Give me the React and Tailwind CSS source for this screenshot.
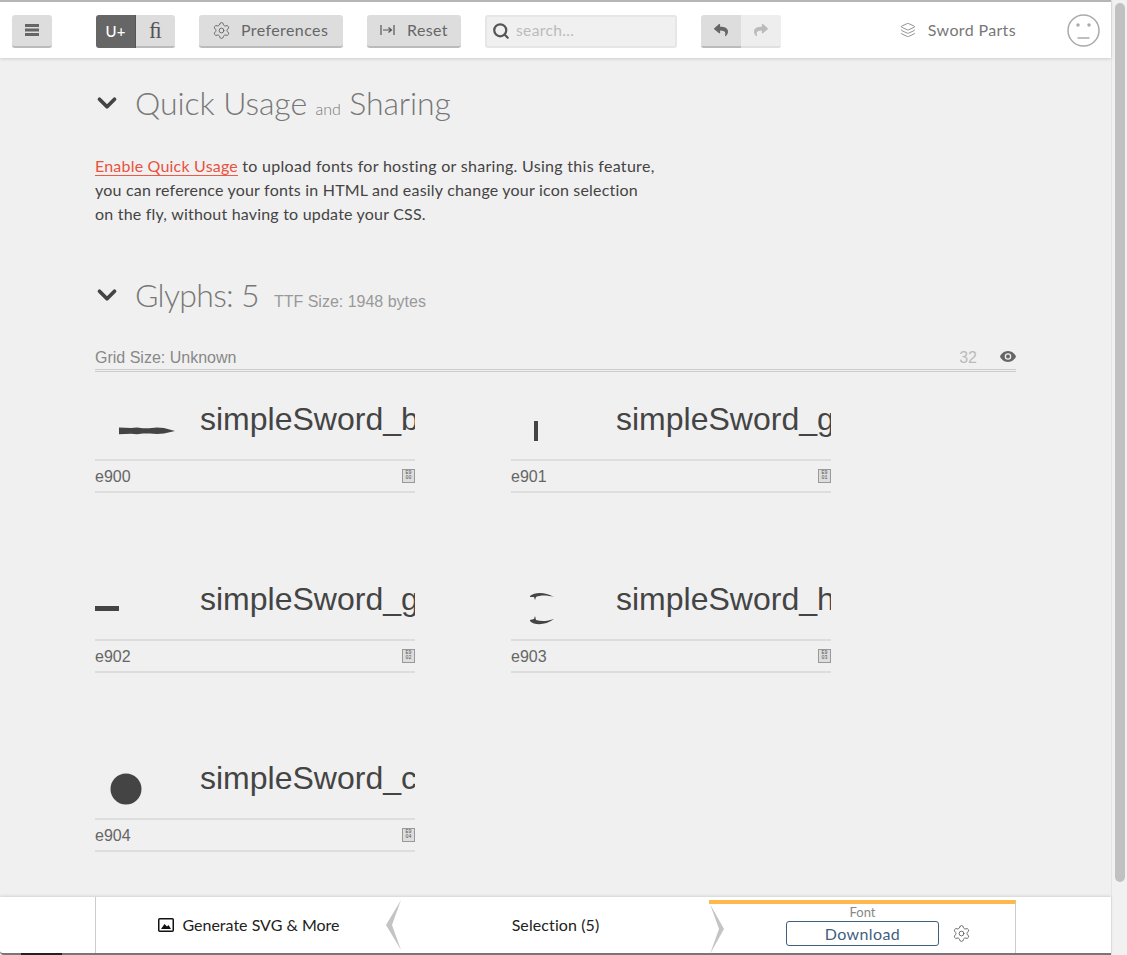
import React from "react";
import { ChevronDown, Search, Settings, Layers } from "lucide-react";
import { FaReply, FaShare } from "react-icons/fa";

const uiFont = { fontFamily: "Lato, 'Noto Sans', sans-serif" };

const Blade = () => (
  <svg width="60" height="12" viewBox="0 0 60 12" className="fill-[#444]">
    <path d="M2 2.5 L14 3 L20 2.5 L26 3.2 L32 3.2 L40 2.6 L47 3 L58 6 L47 8.6 L40 9 L33 8.5 L26 8.6 L20 9.3 L14 8.8 L2 9.2 Z" />
  </svg>
);

const Guard = () => (
  <svg width="60" height="24" viewBox="0 0 60 24" className="fill-[#444]">
    <rect x="23" y="2" width="4" height="20" />
  </svg>
);

const Grip = () => (
  <svg width="60" height="10" viewBox="0 0 60 10" className="fill-[#444]">
    <rect x="0" y="2" width="24" height="5" />
  </svg>
);

const Hilt = () => (
  <svg width="60" height="36" viewBox="0 0 60 36" className="fill-[#444]">
    <path d="M19 5 C24 1 34 1 43 6 C36 4 29 4 25 6 L24 9 L23 6 L19 6 Z" />
    <path d="M19 29 L23 28 L24 25 L25 29 C31 31 37 30 43 28 C35 34 24 35 19 30 Z" />
  </svg>
);

const Dot = () => (
  <svg width="60" height="34" viewBox="0 0 60 34" className="fill-[#444]">
    <circle cx="31" cy="17" r="15.5" />
  </svg>
);

const glyphs = [
  { code: "e900", name: "simpleSword_blade", icon: <Blade />, top: "pt-[36px]", left: "pl-[22px]" },
  { code: "e901", name: "simpleSword_guard", icon: <Guard />, top: "pt-[30px]", left: "pl-0" },
  { code: "e902", name: "simpleSword_grip", icon: <Grip />, top: "pt-[35px]", left: "pl-0" },
  { code: "e903", name: "simpleSword_hilt", icon: <Hilt />, top: "pt-[22px]", left: "pl-0" },
  { code: "e904", name: "simpleSword_circle", icon: <Dot />, top: "pt-[24px]", left: "pl-0" },
];

function GlyphCard({ glyph }) {
  return (
    <div className="w-[320px]">
      <div className="flex h-[72px] overflow-hidden border-b-2 border-[#ddd]">
        <div className={`w-[105px] shrink-0 ${glyph.top} ${glyph.left}`}>{glyph.icon}</div>
        <div className="whitespace-nowrap pt-[12px] font-['Liberation_Sans',sans-serif] text-[32px] leading-[37px] text-[#444]">
          {glyph.name}
        </div>
      </div>
      <div className="flex h-[32px] items-center justify-between border-b-2 border-[#ddd] pt-[2px] font-['Liberation_Sans',sans-serif] text-base text-[#666]">
        <span>{glyph.code}</span>
        <span className="mb-[2px] flex h-[14px] w-[13px] flex-col items-center justify-center border border-[#999] bg-[#ddd] font-['Liberation_Mono',monospace] text-[5px] leading-[5px] text-[#555]">
          <span>{glyph.code.slice(0, 2).toUpperCase()}</span>
          <span>{glyph.code.slice(2)}</span>
        </span>
      </div>
    </div>
  );
}

function SectionTitle({ children, className }) {
  return (
    <div className={`flex items-center ${className}`}>
      <ChevronDown size={30} strokeWidth={3} className="ml-[-3px] mr-[13px] text-[#444]" />
      {children}
    </div>
  );
}

export default function App() {
  return (
    <div className="flex h-[955px] w-[1127px] overflow-hidden bg-white" style={uiFont}>
      <div className="relative flex w-[1111px] flex-col bg-[#f0f0f0]">
        <header className="relative z-10 flex h-[58px] shrink-0 items-center border-t-2 border-[#b5b5b5] bg-white pl-[12px] pt-[2px] text-[#666] shadow-[0_1px_3px_rgba(0,0,0,0.15)]">
          <button className="flex h-[33px] w-[40px] items-center justify-center rounded-[3px] border-b-2 border-[#bbb] bg-[#ddd]">
            <svg width="14" height="12" viewBox="0 0 14 12" className="fill-[#666]">
              <rect y="0" width="14" height="3" />
              <rect y="4.5" width="14" height="3" />
              <rect y="9" width="14" height="3" />
            </svg>
          </button>

          <div className="ml-[44px] flex h-[33px] w-[79px] overflow-hidden rounded-[3px]">
            <div className="flex w-[40px] items-center justify-center border-r border-[#555] bg-[#666] text-[15px] font-medium text-white">U+</div>
            <div className="flex flex-1 items-center justify-center border-b-2 border-[#bbb] bg-[#ddd] pt-[3px] font-['Liberation_Serif',serif] text-[23px] text-[#555]">ﬁ</div>
          </div>

          <button className="ml-[24px] flex h-[33px] w-[144px] items-center rounded-[3px] border-b-2 border-[#bbb] bg-[#ddd] pl-[13px] text-[16px] tracking-[0.4px]">
            <Settings size={19} strokeWidth={1.2} />
            <span className="ml-[10px]">Preferences</span>
          </button>

          <button className="ml-[24px] flex h-[33px] w-[94px] items-center rounded-[3px] border-b-2 border-[#bbb] bg-[#ddd] pl-[13px] text-[16px] tracking-[0.4px]">
            <svg width="15" height="12" viewBox="0 0 15 12" fill="none" stroke="#555" strokeWidth="1.2">
              <path d="M1 1 V11 M14 1 V11 M3 6 H11 M8.5 3.5 L11.5 6 L8.5 8.5" />
            </svg>
            <span className="ml-[12px]">Reset</span>
          </button>

          <div className="ml-[24px] flex h-[33px] w-[192px] items-center rounded-[3px] border-2 border-[#e6e6e6] bg-[#f0f0f0] pl-[5px]">
            <Search size={18} strokeWidth={3} className="text-[#555]" />
            <span className="ml-[6px] text-[15.5px] tracking-[0.4px] text-[#bbb]">search…</span>
          </div>

          <div className="ml-[24px] flex h-[33px] w-[80px] overflow-hidden rounded-[3px]">
            <div className="flex w-[40px] items-center justify-center border-b-2 border-[#bbb] bg-[#ddd] text-[#666]">
              <FaReply size={14} />
            </div>
            <div className="flex flex-1 items-center justify-center border-b-2 border-[#e0e0e0] bg-[#eee] text-[#bbb]">
              <FaShare size={14} />
            </div>
          </div>

          <div className="mb-[2px] ml-[119px] flex w-[116px] items-center text-[16px] tracking-[0.35px] text-[#777]">
            <Layers size={16} strokeWidth={1.2} />
            <span className="ml-[12px] whitespace-nowrap">Sword Parts</span>
          </div>

          <svg width="33" height="33" viewBox="0 0 33 33" fill="none" stroke="#aaa" strokeWidth="1.5" className="mb-[2px] ml-[51px]">
            <circle cx="16.5" cy="16.5" r="15.5" />
            <circle cx="11" cy="11" r="1" fill="#aaa" />
            <circle cx="22" cy="11" r="1" fill="#aaa" />
            <path d="M10.5 24 H22.5" />
          </svg>
        </header>

        <main className="flex-1 overflow-hidden pl-[95px] pr-[95px]">
          <SectionTitle className="mt-[25px] h-[40px]">
            <h2 className="whitespace-nowrap text-[32px] font-light tracking-[-0.1px] text-[#777]">
              Quick Usage <span className="text-[16px]">and</span> Sharing
            </h2>
          </SectionTitle>

          <p className="mt-[31px] w-[600px] text-[16px] leading-[24px] tracking-[0.2px] text-[#444]">
            <a className="border-b border-[#ef5a46] text-[#e8523f]">Enable Quick Usage</a>{" "}
            <span className="tracking-[0.3px]">to upload fonts for hosting or sharing. Using this feature,</span>
            <br />
            you can reference your fonts in HTML and easily change your icon selection
            <br />
            on the fly, without having to update your CSS.
          </p>

          <SectionTitle className="mt-[49px] h-[40px]">
            <h2 className="whitespace-nowrap text-[32px] font-light tracking-[-0.7px] text-[#777]">Glyphs: 5</h2>
            <span className="ml-[15px] mt-[13px] font-['Liberation_Sans',sans-serif] text-base text-[#999]">TTF Size: 1948 bytes</span>
          </SectionTitle>

          <div className="mt-[30px] flex h-[27px] items-center justify-between border-b-[3px] border-double border-[#ccc] pt-[2px] font-['Liberation_Sans',sans-serif] text-base text-[#888]">
            <span>Grid Size: Unknown</span>
            <span className="flex items-center text-[#bbb]">
              32
              <svg width="16" height="11" viewBox="0 0 16 11" className="mb-[3px] ml-[23px] fill-[#666]">
                <path d="M8 0 C12 0 15 3 16 5.5 C15 8 12 11 8 11 C4 11 1 8 0 5.5 C1 3 4 0 8 0 Z M8 2.2 A3.3 3.3 0 1 0 8 8.8 A3.3 3.3 0 1 0 8 2.2 Z" />
                <circle cx="8" cy="5.5" r="2" />
              </svg>
            </span>
          </div>

          <div className="mt-[17px] grid grid-cols-[320px_320px] gap-x-[96px] gap-y-[75.5px]">
            {glyphs.map((glyph) => (
              <GlyphCard key={glyph.code} glyph={glyph} />
            ))}
          </div>
        </main>

        <footer className="relative z-10 flex h-[58px] shrink-0 rounded-bl-[4px] border-b-2 border-[#777] bg-white pl-[95px] text-[16px] text-[#222] shadow-[0_-1px_3px_rgba(0,0,0,0.12)]">
          <div className="flex w-[291px] items-center justify-center border-l border-[#ccc] pl-[16px]">
            <svg width="16" height="14" viewBox="0 0 16 14" className="mr-[8px]">
              <rect x="0.75" y="0.75" width="14.5" height="12.5" rx="1" fill="none" stroke="#111" strokeWidth="1.5" />
              <path d="M3 11 L6.5 6 L9 8.5 L10.5 7 L13 11 Z" fill="#111" />
            </svg>
            Generate SVG &amp; More
          </div>
          <svg width="16" height="50" viewBox="0 0 16 50" className="mt-[3px] fill-[#c4c4c4]">
            <path d="M15 0 L0 25 L15 50 L6 25 Z" />
          </svg>
          <div className="flex w-[307px] items-center justify-center tracking-[0.1px]">Selection (5)</div>
          <div className="relative mt-[3px] flex w-[307px] flex-col border-r border-[#ccc] border-t-[4px] border-t-[#ffb84d]">
            <svg width="16" height="50" viewBox="0 0 16 50" className="absolute left-0 top-0 fill-[#c4c4c4]">
              <path d="M1 0 L15 25 L1 50 L10 25 Z" />
            </svg>
            <div className="pl-[77px]">
              <div className="w-[153px] text-center text-[13px] leading-[17px] text-[#888]">Font</div>
              <div className="flex items-center">
                <button className="h-[25px] w-[153px] rounded-[3px] border border-[#3f5f7f] text-[16px] leading-[22px] tracking-[0.4px] text-[#3f5f7f]">Download</button>
                <Settings size={19} strokeWidth={1.2} className="ml-[13px] text-[#666]" />
              </div>
            </div>
          </div>
          <div className="absolute bottom-[-2px] left-[21px] h-[2px] w-[41px] bg-[#222]" />
        </footer>
      </div>

      <div className="flex w-[16px] justify-center border-l border-[#e5e5e5] bg-[#f1f1f1] pt-[3px]">
        <div className="h-[879px] w-[10px] rounded-[5px] bg-[#c1c1c1]" />
      </div>
    </div>
  );
}
